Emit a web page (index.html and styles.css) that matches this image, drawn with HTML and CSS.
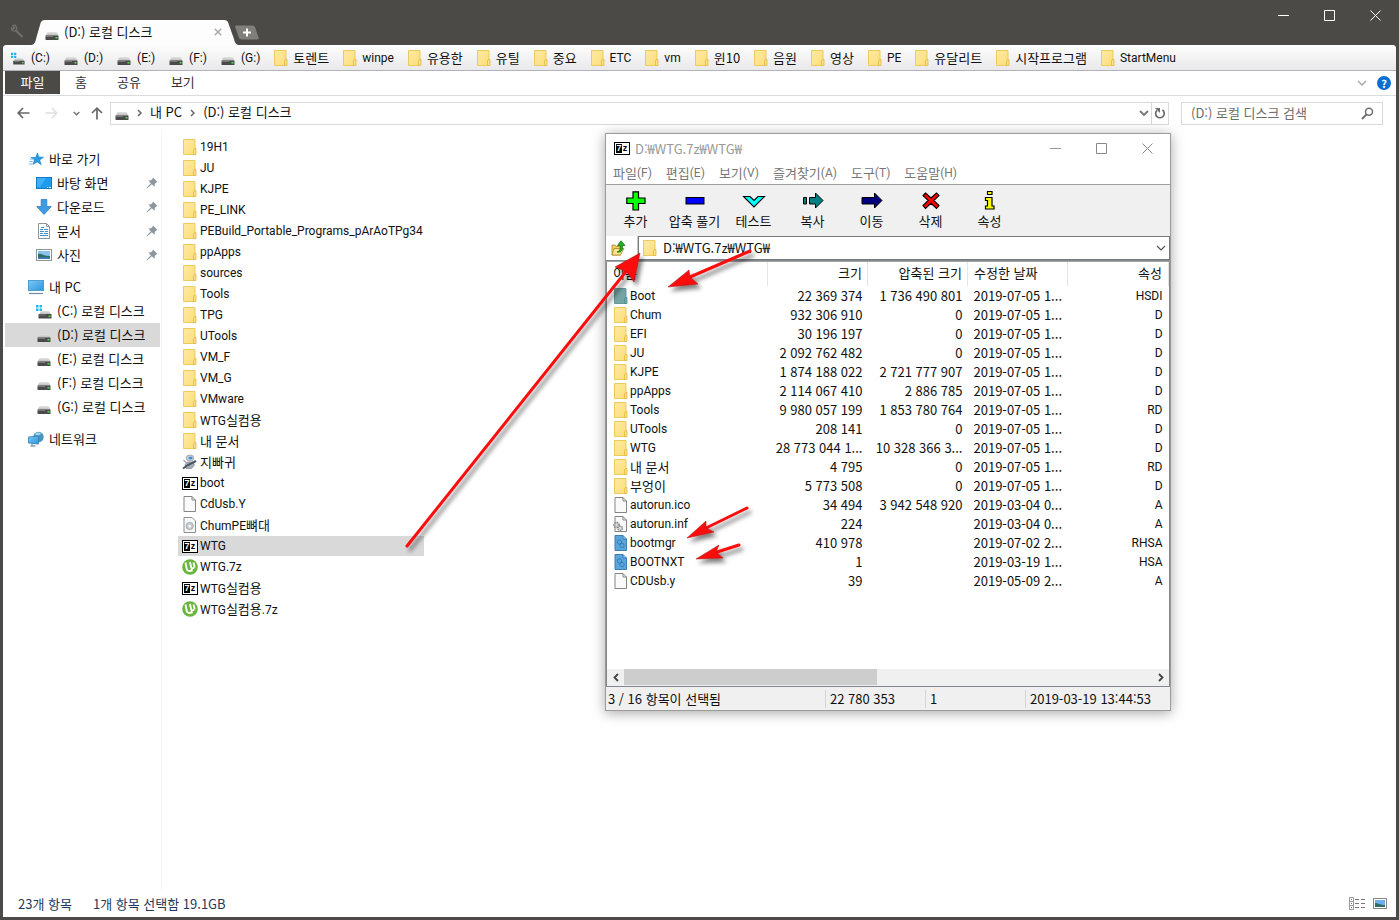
FILE: index.html
```html
<!DOCTYPE html>
<html lang="ko">
<head>
<meta charset="utf-8">
<title>(D:) 로컬 디스크</title>
<link rel="stylesheet" href="styles.css">
</head>
<body>
<svg class="defs" aria-hidden="true">
  <defs>
    <linearGradient id="gFolder" x1="0" y1="0" x2="1" y2="1"><stop offset="0" stop-color="#ffeaa3"/><stop offset="1" stop-color="#fbdd78"/></linearGradient>
    <linearGradient id="gBlue" x1="0" y1="0" x2="1" y2="1"><stop offset="0" stop-color="#7cc9f7"/><stop offset="1" stop-color="#2b95dd"/></linearGradient>
    <linearGradient id="gDrive" x1="0" y1="0" x2="0" y2="1"><stop offset="0" stop-color="#e4e4e4"/><stop offset="1" stop-color="#b4b4b4"/></linearGradient>
    <filter id="shadow" x="-30%" y="-60%" width="160%" height="220%"><feDropShadow dx="3" dy="4" stdDeviation="2" flood-color="#000" flood-opacity=".5"/></filter>
  </defs>
  <symbol id="folder" viewBox="0 0 14 16"><path d="M.5.5H12V15.500H.5z" fill="url(#gFolder)" stroke="#eccb5c"/><path d="M10.500 15.500V11l1-1.500h1.500v6z" fill="#fbe08a" stroke="#e3b93f" stroke-width=".8"/></symbol>
  <symbol id="folder-sel" viewBox="0 0 14 16"><path d="M.5.5H12V15.500H.5z" fill="#76a5a6" stroke="#65999d"/><path d="M10.500 15.500V11l1-1.500h1.500v6z" fill="#79a9a6" stroke="#568a8a" stroke-width=".8"/></symbol>
  <symbol id="drive" viewBox="0 0 14 16"><path d="M2.500 7h9L13.500 11H.5z" fill="url(#gDrive)"/><rect x=".5" y="10.500" width="13" height="4.500" rx=".5" fill="#4a4a4a"/><path d="M1 11h7v1H1z" fill="#777"/><rect x="10.500" y="12" width="2" height="1.500" fill="#4be04b"/></symbol>
  <symbol id="drive-win" viewBox="0 0 16 16"><path d="M5 8h8l2 3.500H3z" fill="url(#gDrive)"/><rect x="2.500" y="11" width="13" height="4.500" rx=".5" fill="#4a4a4a"/><path d="M3 11.500h7v1H3z" fill="#777"/><rect x="12.500" y="12.500" width="2" height="1.500" fill="#4be04b"/><path d="M0 2h2.500v2.500H0zM3.500 2H6v2.500H3.500zM0 5.500h2.500V8H0zM3.500 5.500H6V8H3.500z" fill="#18b9ee"/></symbol>
  <symbol id="star" viewBox="0 0 16 16"><path d="M9.500 2l1.300 4 4.700.2-3.800 2.700 1.500 4.800-4-2.800-4.400 2.600 1.700-4.700L3 6.500h4.600z" fill="#2a9be4" stroke="#1c7fc4" stroke-width=".6"/><path d="M2 8h3M1.500 10.500h3M1 13h3" stroke="#5db7ec"/></symbol>
  <symbol id="desktop" viewBox="0 0 16 16"><rect x=".5" y="2.500" width="15" height="11" fill="#1f9bf0" stroke="#0f7cc7"/><path d="M1 3h9L4 12H1z" fill="#3fb0f8"/><path d="M11 12.500h1M13 12.500h2" stroke="#fff"/></symbol>
  <symbol id="download" viewBox="0 0 16 16"><path d="M5.200.5h5.600V7.500h4.500L8 15.500.7 7.500h4.500z" fill="#3e9ae2" stroke="#2d80c8" stroke-width=".8"/></symbol>
  <symbol id="document" viewBox="0 0 16 16"><path d="M2.500.5h8l3 3v12h-11z" fill="#fff" stroke="#8b959d"/><path d="M10.500.5v3h3" fill="none" stroke="#8b959d"/><path d="M4 6.500h3M8 6.500h4M4 8.500h4M9 8.500h3M4 10.500h3M8 10.500h4M4 12.500h8M5 4.500h3" stroke="#3a8fcf"/></symbol>
  <symbol id="picture" viewBox="0 0 16 16"><rect x=".5" y="2.500" width="15" height="11" fill="#fff" stroke="#8b959d"/><rect x="2" y="4" width="12" height="8" fill="#8cc3ec"/><path d="M2 7c3-1 5 2 12 2v3H2z" fill="#2f6e68"/><path d="M2 10.500h12V12H2z" fill="#3b7fc0"/></symbol>
  <symbol id="computer" viewBox="0 0 16 16"><rect x=".5" y="1.500" width="15" height="10" fill="url(#gBlue)" stroke="#4e9fce"/><path d="M1 14.500h14" stroke="#6f8aa8" stroke-width="1.200"/></symbol>
  <symbol id="network" viewBox="0 0 16 16"><circle cx="10.500" cy="6" r="5.200" fill="#4b94be"/><path d="M7 3c2-2 5-2 6 0-2 1-3 3-6 0z" fill="#9fd4ec"/><path d="M.5 6l10-1v8L.5 12z" fill="url(#gBlue)" stroke="#2d7fb5" stroke-width=".8"/><path d="M4 13v1.500M2.500 15h5" stroke="#4d7187"/></symbol>
  <symbol id="pin" viewBox="0 0 12 12"><path d="M7 .5L11.500 5l-1.300.5L8.800 7l-.3 2.700L5.800 7.200 1 11.500.5 11 4.800 6.200 2.300 3.500 5 3.200 6.500 1.800z" fill="#8d979f"/></symbol>
  <symbol id="utorrent" viewBox="0 0 16 16"><circle cx="8" cy="8" r="7.800" fill="#6ab53e"/><path d="M3.500 3.500l1.200 6.200c.5 2.600 3.300 2.800 4.900 1.300l.4 1.600M8 3l1.100 5.200c.3 1.500 2.100 1.400 2.800.4M11.500 3.500l1.200 5" fill="none" stroke="#fff" stroke-width="1.900"/></symbol>
  <symbol id="file" viewBox="0 0 14 16"><path d="M1 .5h8l3.500 3.500v11.500H1z" fill="#fafafa" stroke="#858585"/><path d="M9 .5V4h3.500" fill="none" stroke="#858585"/></symbol>
  <symbol id="file-set" viewBox="0 0 14 16"><path d="M1 .5h8l3.500 3.500v11.500H1z" fill="#f7f7f7" stroke="#8f8f8f"/><circle cx="6.700" cy="9" r="3.600" fill="#c8cccf" stroke="#a6abb0"/><path d="M5.500 7.500l3 1.500-2.500 2z" fill="#fff"/></symbol>
  <symbol id="file-inf" viewBox="0 0 16 16"><path d="M2 .5h8l3.500 3.500v11.500H2z" fill="#fafafa" stroke="#858585"/><path d="M10 .5V4h3.500" fill="none" stroke="#858585"/><circle cx="3.500" cy="9" r="2.600" fill="none" stroke="#8e8e8e" stroke-width="1.600" stroke-dasharray="1.600 .8"/><circle cx="7.200" cy="12.300" r="2.200" fill="#ddd" stroke="#8e8e8e" stroke-width="1.500" stroke-dasharray="1.400 .7"/><circle cx="3.500" cy="9" r="1.700" fill="#e6e6e6" stroke="#999" stroke-width=".8"/></symbol>
  <symbol id="file-sys" viewBox="0 0 14 16"><path d="M1 .5h8l3.500 3.500v11.500H1z" fill="#5ba5db" stroke="#3b7fb6"/><path d="M9 .5V4h3.500" fill="#8ac4ec" stroke="#3b7fb6"/><circle cx="5.500" cy="7" r="2.200" fill="none" stroke="#2f75b0" stroke-width=".8"/><circle cx="8" cy="10.500" r="2.200" fill="none" stroke="#2f75b0" stroke-width=".8"/></symbol>
  <symbol id="robot" viewBox="0 0 16 16"><ellipse cx="8" cy="4" rx="3.800" ry="3" fill="#c6cdd5" stroke="#8994a1" stroke-width=".7"/><ellipse cx="8.500" cy="4" rx="2" ry="1.300" fill="#2c93e0"/><path d="M5 8l6 0 1.500 3-3 3.500H4L3 11z" fill="#a4acb6" stroke="#7a848f" stroke-width=".7"/><path d="M1 14.500l5-3.500 8-4" stroke="#4c5661" stroke-width="2" fill="none"/><path d="M1.500 6l3 3" stroke="#a4acb6" stroke-width="1.500"/></symbol>
</svg>

<header class="titlebar">
  <button class="wrench" aria-label="설정"><svg width="14" height="14" viewBox="0 0 14 14"><path d="M6 6.500l6 6" stroke="#706e6a" stroke-width="2.200" stroke-linecap="round"/><path d="M2.500 1.500L4.500 3.500 3.500 5l-2-1C1 6.500 3.500 8 6 6.500 7.500 4.500 6.500 1 3.500 1" fill="none" stroke="#706e6a" stroke-width="1.400"/></svg></button>
  <div class="tab">
    <svg class="tab-shape" width="210" height="25" viewBox="0 0 210 25"><path d="M0 25c4 0 5-2 6-6l4-14c1-4 2-5 6-5h177c4 0 5 1 6 5l5 14c1 4 2 6 6 6z" fill="#fdfdfd"/></svg>
    <svg class="ic14"><use href="#drive"/></svg><span class="tab-name">(D:) 로컬 디스크</span>
    <button class="tab-close" aria-label="탭 닫기"><svg width="8" height="8" viewBox="0 0 8 8"><path d="M.8.8l6.400 6.400M7.200.8L.8 7.200" stroke="#a9a9a9" stroke-width="1.500"/></svg></button>
  </div>
  <button class="newtab" aria-label="새 탭"><svg width="24" height="15" viewBox="0 0 24 15"><path d="M1 .5h16c2 0 3 1 3.500 3l3 9c.3 1.500 0 2-1.500 2H7c-2 0-3-1-3.500-3L.5 3C0 1 0 .5 1 .5z" fill="#817f7b"/><path d="M12 3.500v8M8 7.500h8" stroke="#fff" stroke-width="2"/></svg></button>
  <div class="caption">
    <button aria-label="최소화"><svg width="11" height="11" viewBox="0 0 11 11"><path d="M0 5.500h11" stroke="#fff"/></svg></button>
    <button aria-label="최대화"><svg width="11" height="11" viewBox="0 0 11 11"><path d="M.5.5h10v10H.5z" stroke="#fff" fill="none"/></svg></button>
    <button aria-label="닫기"><svg width="11" height="11" viewBox="0 0 11 11"><path d="M.5.5l10 10M10.500.5l-10 10" stroke="#fff"/></svg></button>
  </div>
</header>

<div class="frame">
  <nav class="bookmarks">
    <button class="drv lat"><svg class="ic14"><use href="#drive-win"/></svg>(C:)</button>
    <button class="drv lat"><svg class="ic14"><use href="#drive"/></svg>(D:)</button>
    <button class="drv lat"><svg class="ic14"><use href="#drive"/></svg>(E:)</button>
    <button class="drv lat"><svg class="ic14"><use href="#drive"/></svg>(F:)</button>
    <button class="drv lat"><svg class="ic14"><use href="#drive"/></svg>(G:)</button>
    <button><svg class="ic14"><use href="#folder"/></svg>토렌트</button>
    <button class="lat"><svg class="ic14"><use href="#folder"/></svg>winpe</button>
    <button><svg class="ic14"><use href="#folder"/></svg>유용한</button>
    <button><svg class="ic14"><use href="#folder"/></svg>유틸</button>
    <button><svg class="ic14"><use href="#folder"/></svg>중요</button>
    <button class="lat"><svg class="ic14"><use href="#folder"/></svg>ETC</button>
    <button class="lat"><svg class="ic14"><use href="#folder"/></svg>vm</button>
    <button><svg class="ic14"><use href="#folder"/></svg>윈10</button>
    <button><svg class="ic14"><use href="#folder"/></svg>음원</button>
    <button><svg class="ic14"><use href="#folder"/></svg>영상</button>
    <button class="lat"><svg class="ic14"><use href="#folder"/></svg>PE</button>
    <button><svg class="ic14"><use href="#folder"/></svg>유달리트</button>
    <button><svg class="ic14"><use href="#folder"/></svg>시작프로그램</button>
    <button class="lat"><svg class="ic14"><use href="#folder"/></svg>StartMenu</button>
  </nav>

  <div class="ribbon">
    <button class="ribbon-file">파일</button>
    <button>홈</button>
    <button>공유</button>
    <button>보기</button>
    <span class="spacer"></span>
    <button class="expand" aria-label="리본 확장"><svg width="10" height="6" viewBox="0 0 10 6"><path d="M1 1l4 4 4-4" fill="none" stroke="#a5a5a5" stroke-width="1.300"/></svg></button>
    <button class="help" aria-label="도움말">?</button>
  </div>

  <div class="addressrow">
    <div class="navbuttons">
      <button class="nav-back" aria-label="뒤로"><svg width="13" height="12" viewBox="0 0 13 12"><path d="M12.500 6H1.500M6 1L1.200 6 6 11" fill="none" stroke="#686868" stroke-width="1.700"/></svg></button>
      <button class="nav-forward" aria-label="앞으로"><svg width="13" height="12" viewBox="0 0 13 12"><path d="M.5 6h11M7 1l4.800 5L7 11" fill="none" stroke="#dedede" stroke-width="1.500"/></svg></button>
      <button class="nav-recent" aria-label="최근 위치"><svg width="7" height="5" viewBox="0 0 7 5"><path d="M.7 1l2.800 2.800L6.300 1" fill="none" stroke="#777" stroke-width="1.500"/></svg></button>
      <button aria-label="위로"><svg width="12" height="13" viewBox="0 0 12 13"><path d="M6 12.500V1.500M1 6l5-4.800L11 6" fill="none" stroke="#686868" stroke-width="1.700"/></svg></button>
    </div>
    <div class="address">
      <svg class="ic14"><use href="#drive"/></svg>
      <svg class="crumb-sep" width="5" height="8" viewBox="0 0 5 8"><path d="M1 1l3 3-3 3" fill="none" stroke="#666" stroke-width="1.500"/></svg>
      <button>내 PC</button>
      <svg class="crumb-sep" width="5" height="8" viewBox="0 0 5 8"><path d="M1 1l3 3-3 3" fill="none" stroke="#666" stroke-width="1.500"/></svg>
      <button>(D:) 로컬 디스크</button>
      <span class="spacer"></span>
      <button class="history" aria-label="이전 위치"><svg width="10" height="7" viewBox="0 0 10 7"><path d="M1 1l4 4 4-4" fill="none" stroke="#777" stroke-width="1.900"/></svg></button>
      <button class="refresh" aria-label="새로 고침"><svg width="12" height="12" viewBox="0 0 12 12"><path d="M3 3.300A4.300 4.300 0 1 0 8.500 3" fill="none" stroke="#6c6c6c" stroke-width="1.700"/><path d="M1 1h5v5z" fill="#6c6c6c"/></svg></button>
    </div>
    <form class="search">
      <input type="text" aria-label="검색" placeholder="(D:) 로컬 디스크 검색">
      <svg width="13" height="13" viewBox="0 0 13 13"><circle cx="8" cy="4.800" r="3.500" fill="none" stroke="#6f6f6f" stroke-width="1.500"/><path d="M5.500 7.500L1 12" stroke="#6f6f6f" stroke-width="2"/></svg>
    </form>
  </div>

  <main class="content">
    <nav class="sidebar">
      <a class="head" href="#"><svg class="ic16"><use href="#star"/></svg>바로 가기</a>
      <a href="#"><svg class="ic16"><use href="#desktop"/></svg><span>바탕 화면</span><svg class="pin"><use href="#pin"/></svg></a>
      <a href="#"><svg class="ic16"><use href="#download"/></svg><span>다운로드</span><svg class="pin"><use href="#pin"/></svg></a>
      <a href="#"><svg class="ic16"><use href="#document"/></svg><span>문서</span><svg class="pin"><use href="#pin"/></svg></a>
      <a href="#"><svg class="ic16"><use href="#picture"/></svg><span>사진</span><svg class="pin"><use href="#pin"/></svg></a>
      <a class="head" href="#"><svg class="ic16"><use href="#computer"/></svg>내 PC</a>
      <a href="#"><svg class="ic16"><use href="#drive-win"/></svg>(C:) 로컬 디스크</a>
      <a class="selected" href="#"><svg class="ic16"><use href="#drive"/></svg>(D:) 로컬 디스크</a>
      <a href="#"><svg class="ic16"><use href="#drive"/></svg>(E:) 로컬 디스크</a>
      <a href="#"><svg class="ic16"><use href="#drive"/></svg>(F:) 로컬 디스크</a>
      <a href="#"><svg class="ic16"><use href="#drive"/></svg>(G:) 로컬 디스크</a>
      <a class="head" href="#"><svg class="ic16"><use href="#network"/></svg>네트워크</a>
    </nav>
    <ul class="files">
      <li class="lat"><svg class="ic16"><use href="#folder"/></svg>19H1</li>
      <li class="lat"><svg class="ic16"><use href="#folder"/></svg>JU</li>
      <li class="lat"><svg class="ic16"><use href="#folder"/></svg>KJPE</li>
      <li class="lat"><svg class="ic16"><use href="#folder"/></svg>PE_LINK</li>
      <li class="lat"><svg class="ic16"><use href="#folder"/></svg>PEBuild_Portable_Programs_pArAoTPg34</li>
      <li class="lat"><svg class="ic16"><use href="#folder"/></svg>ppApps</li>
      <li class="lat"><svg class="ic16"><use href="#folder"/></svg>sources</li>
      <li class="lat"><svg class="ic16"><use href="#folder"/></svg>Tools</li>
      <li class="lat"><svg class="ic16"><use href="#folder"/></svg>TPG</li>
      <li class="lat"><svg class="ic16"><use href="#folder"/></svg>UTools</li>
      <li class="lat"><svg class="ic16"><use href="#folder"/></svg>VM_F</li>
      <li class="lat"><svg class="ic16"><use href="#folder"/></svg>VM_G</li>
      <li class="lat"><svg class="ic16"><use href="#folder"/></svg>VMware</li>
      <li><svg class="ic16"><use href="#folder"/></svg><span><span class="lat">WTG</span>실컴용</span></li>
      <li><svg class="ic16"><use href="#folder"/></svg>내 문서</li>
      <li><svg class="ic16"><use href="#robot"/></svg>지빠귀</li>
      <li class="lat"><span class="seven"><b>7</b><b>z</b></span>boot</li>
      <li class="lat"><svg class="ic16"><use href="#file"/></svg>CdUsb.Y</li>
      <li><svg class="ic16"><use href="#file-set"/></svg><span><span class="lat">ChumPE</span>뼈대</span></li>
      <li class="lat selected"><span class="seven"><b>7</b><b>z</b></span>WTG</li>
      <li class="lat"><svg class="ic16"><use href="#utorrent"/></svg>WTG.7z</li>
      <li><span class="seven"><b>7</b><b>z</b></span><span><span class="lat">WTG</span>실컴용</span></li>
      <li><svg class="ic16"><use href="#utorrent"/></svg><span><span class="lat">WTG</span>실컴용<span class="lat">.7z</span></span></li>
    </ul>
  </main>

  <footer class="status">
    <span>23개 항목</span>
    <span>1개 항목 선택함 19.1GB</span>
    <span class="spacer"></span>
    <button aria-label="자세히"><svg width="17" height="13" viewBox="0 0 17 13"><path d="M.5.5h4v12h-4zM.5 4.500h4M.5 8.500h4" fill="none" stroke="#999"/><path d="M2 2.500h1M2 6.500h1M2 10.500h1" stroke="#3c78b4"/><path d="M6 2.500h4M12 2.500h4M6 6.500h4M12 6.500h4M6 10.500h4M12 10.500h4" stroke="#777"/></svg></button>
    <button aria-label="큰 아이콘"><svg width="14" height="11" viewBox="0 0 14 11"><rect x=".5" y=".5" width="13" height="10" fill="#fff" stroke="#888"/><path d="M2 2h10v7H2z" fill="#6fb0ec"/><path d="M2 5c3 0 5 2 10 2v2H2z" fill="#2f6e68"/></svg></button>
  </footer>
</div>

<section class="zip">
  <header class="zip-title">
    <span class="seven"><b>7</b><b>z</b></span><span class="zip-name">D:₩WTG.7z₩WTG₩</span>
    <button aria-label="최소화"><svg width="11" height="11" viewBox="0 0 11 11"><path d="M0 5.500h11" stroke="#999"/></svg></button>
    <button aria-label="최대화"><svg width="11" height="11" viewBox="0 0 11 11"><path d="M.5.5h10v10H.5z" stroke="#888" fill="none"/></svg></button>
    <button aria-label="닫기"><svg width="11" height="11" viewBox="0 0 11 11"><path d="M.5.5l10 10M10.500.5l-10 10" stroke="#888"/></svg></button>
  </header>
  <nav class="zip-menu">
    <button>파일<span class="lat">(F)</span></button><button>편집<span class="lat">(E)</span></button><button>보기<span class="lat">(V)</span></button><button>즐겨찾기<span class="lat">(A)</span></button><button>도구<span class="lat">(T)</span></button><button>도움말<span class="lat">(H)</span></button>
  </nav>
  <div class="zip-tools">
    <button><svg width="24" height="20" viewBox="0 0 24 20"><path d="M9 .8h5.500V7H21v5.500h-6.500V19H9v-6.500H2.800V7H9z" fill="#0f0" stroke="#000" stroke-width="1.200"/></svg>추가</button>
    <button><svg width="24" height="20" viewBox="0 0 24 20"><rect x="3" y="6.500" width="18" height="6.500" fill="#00f" stroke="#000"/></svg>압축 풀기</button>
    <button><svg width="24" height="20" viewBox="0 0 24 20"><path d="M1.500 5.500H8l4 4 4-4h6.500L12 16z" fill="#0ff" stroke="#000" stroke-width="1.100"/></svg>테스트</button>
    <button><svg width="24" height="20" viewBox="0 0 24 20"><path d="M2.500 6.500h3v6.500h-3zM8.500 6.500h6V2L22 9.500 14.500 17v-4H8.500z" fill="#008080" stroke="#000"/></svg>복사</button>
    <button><svg width="24" height="20" viewBox="0 0 24 20"><path d="M2 6.500h12.500V2L22 9.500 14.500 17v-4H2z" fill="#000080" stroke="#000"/></svg>이동</button>
    <button><svg width="24" height="20" viewBox="0 0 24 20"><path d="M6.500 2L12 7l5.500-5 2.500 2.500-5.200 5 5.200 5-2.500 3-5.500-5.200-5.500 5.200L4 14.500l5.200-5L4 4.500z" fill="#f00" stroke="#000" stroke-width="1.100"/></svg>삭제</button>
    <button><svg width="24" height="20" viewBox="0 0 24 20"><path d="M9.500.5H14v3H9.500zM7.500 6.500H14V15h2v3H7.500v-3h2V9.500h-2z" fill="#ff0" stroke="#000" stroke-width="1.200"/></svg>속성</button>
  </div>
  <div class="zip-path">
    <button class="up" aria-label="위로"><svg width="15" height="16" viewBox="0 0 15 16"><path d="M1 5h3l1 1.500h4.500V15H1z" fill="#f0d060" stroke="#ad8820" stroke-width=".8"/><path d="M3 8.500h10L9.500 15H1z" fill="#fbe690" stroke="#ad8820" stroke-width=".8"/><path d="M6 12c3-.5 3.500-3 3-6.500H6.500L10 .8l4 4.700h-2.500C12 10 10.500 13 6 12z" fill="#22b022" stroke="#0a6a0a" stroke-width=".7"/></svg></button>
    <div class="combo"><svg class="ic16"><use href="#folder"/></svg><input type="text" aria-label="경로" value="D:₩WTG.7z₩WTG₩"><button aria-label="경로 목록"><svg width="10" height="6" viewBox="0 0 10 6"><path d="M1 1l4 4 4-4" fill="none" stroke="#555" stroke-width="1.200"/></svg></button></div>
  </div>
  <div class="zip-list">
    <table>
      <colgroup><col><col class="c-num"><col class="c-num"><col class="c-num"><col class="c-last"></colgroup>
      <thead><tr><th>이름</th><th class="r">크기</th><th class="r">압축된 크기</th><th>수정한 날짜</th><th class="r">속성</th></tr></thead>
      <tbody>
        <tr><td class="lat"><svg class="ic16"><use href="#folder-sel"/></svg>Boot</td><td class="r">22 369 374</td><td class="r">1 736 490 801</td><td>2019-07-05 1...</td><td class="r lat">HSDI</td></tr>
        <tr><td class="lat"><svg class="ic16"><use href="#folder"/></svg>Chum</td><td class="r">932 306 910</td><td class="r">0</td><td>2019-07-05 1...</td><td class="r lat">D</td></tr>
        <tr><td class="lat"><svg class="ic16"><use href="#folder"/></svg>EFI</td><td class="r">30 196 197</td><td class="r">0</td><td>2019-07-05 1...</td><td class="r lat">D</td></tr>
        <tr><td class="lat"><svg class="ic16"><use href="#folder"/></svg>JU</td><td class="r">2 092 762 482</td><td class="r">0</td><td>2019-07-05 1...</td><td class="r lat">D</td></tr>
        <tr><td class="lat"><svg class="ic16"><use href="#folder"/></svg>KJPE</td><td class="r">1 874 188 022</td><td class="r">2 721 777 907</td><td>2019-07-05 1...</td><td class="r lat">D</td></tr>
        <tr><td class="lat"><svg class="ic16"><use href="#folder"/></svg>ppApps</td><td class="r">2 114 067 410</td><td class="r">2 886 785</td><td>2019-07-05 1...</td><td class="r lat">D</td></tr>
        <tr><td class="lat"><svg class="ic16"><use href="#folder"/></svg>Tools</td><td class="r">9 980 057 199</td><td class="r">1 853 780 764</td><td>2019-07-05 1...</td><td class="r lat">RD</td></tr>
        <tr><td class="lat"><svg class="ic16"><use href="#folder"/></svg>UTools</td><td class="r">208 141</td><td class="r">0</td><td>2019-07-05 1...</td><td class="r lat">D</td></tr>
        <tr><td class="lat"><svg class="ic16"><use href="#folder"/></svg>WTG</td><td class="r">28 773 044 1...</td><td class="r">10 328 366 3...</td><td>2019-07-05 1...</td><td class="r lat">D</td></tr>
        <tr><td><svg class="ic16"><use href="#folder"/></svg>내 문서</td><td class="r">4 795</td><td class="r">0</td><td>2019-07-05 1...</td><td class="r lat">RD</td></tr>
        <tr><td><svg class="ic16"><use href="#folder"/></svg>부엉이</td><td class="r">5 773 508</td><td class="r">0</td><td>2019-07-05 1...</td><td class="r lat">D</td></tr>
        <tr><td class="lat"><svg class="ic16"><use href="#file"/></svg>autorun.ico</td><td class="r">34 494</td><td class="r">3 942 548 920</td><td>2019-03-04 0...</td><td class="r lat">A</td></tr>
        <tr><td class="lat"><svg class="ic16"><use href="#file-inf"/></svg>autorun.inf</td><td class="r">224</td><td class="r"></td><td>2019-03-04 0...</td><td class="r lat">A</td></tr>
        <tr><td class="lat"><svg class="ic16"><use href="#file-sys"/></svg>bootmgr</td><td class="r">410 978</td><td class="r"></td><td>2019-07-02 2...</td><td class="r lat">RHSA</td></tr>
        <tr><td class="lat"><svg class="ic16"><use href="#file-sys"/></svg>BOOTNXT</td><td class="r">1</td><td class="r"></td><td>2019-03-19 1...</td><td class="r lat">HSA</td></tr>
        <tr><td class="lat"><svg class="ic16"><use href="#file"/></svg>CDUsb.y</td><td class="r">39</td><td class="r"></td><td>2019-05-09 2...</td><td class="r lat">A</td></tr>
      </tbody>
    </table>
    <div class="hscroll">
      <button aria-label="왼쪽"><svg width="6" height="9" viewBox="0 0 6 9"><path d="M5 1L1.500 4.500 5 8" fill="none" stroke="#444" stroke-width="1.800"/></svg></button>
      <div class="track"><div class="thumb"></div></div>
      <button aria-label="오른쪽"><svg width="6" height="9" viewBox="0 0 6 9"><path d="M1 1l3.500 3.500L1 8" fill="none" stroke="#444" stroke-width="1.800"/></svg></button>
    </div>
  </div>
  <footer class="zip-status"><span>3 / 16 항목이 선택됨</span><span>22 780 353</span><span>1</span><span>2019-03-19 13:44:53</span></footer>
</section>

<svg class="arrows" width="1399" height="920" viewBox="0 0 1399 920" aria-hidden="true">
  <g fill="#fb0d0d" stroke="#fb0d0d" filter="url(#shadow)">
    <path d="M407 546L628 269" stroke-width="3" stroke-linecap="round"/>
    <path d="M640 253L634 282 627 272 615 267z" stroke="#a01010" stroke-width=".5"/>
  </g>
  <g fill="#fb0d0d" stroke="#fb0d0d" filter="url(#shadow)">
    <path d="M750 251L690 277" stroke-width="3" stroke-linecap="round"/>
    <path d="M668 287L689 270 690 277 698 284z" stroke="#a01010" stroke-width=".5"/>
  </g>
  <g fill="#fb0d0d" stroke="#fb0d0d" filter="url(#shadow)">
    <path d="M747 508L706 528" stroke-width="3" stroke-linecap="round"/>
    <path d="M687 538L706 521 706 528 714 532z" stroke="#a01010" stroke-width=".5"/>
  </g>
  <g fill="#fb0d0d" stroke="#fb0d0d" filter="url(#shadow)">
    <path d="M739 545L714 553" stroke-width="3" stroke-linecap="round"/>
    <path d="M696 559L719 545 716 552 723 558z" stroke="#a01010" stroke-width=".5"/>
  </g>
</svg>
</body>
</html>
```

FILE: styles.css
```css
* { box-sizing: border-box; }
html, body { height: 100%; }
body {
  margin: 0;
  display: flex;
  flex-direction: column;
  padding: 0 3px 3px;
  background: #4b4a47;
  color: #111;
  font: 13px/18px "Noto Sans CJK KR", sans-serif;
  white-space: nowrap;
  overflow: hidden;
}
button {
  display: flex;
  align-items: center;
  justify-content: center;
  margin: 0;
  padding: 0;
  border: 0;
  background: none;
  color: inherit;
  font: inherit;
  white-space: nowrap;
}
input { font: inherit; color: inherit; border: 0; padding: 0; background: none; outline: 0; min-width: 0; }
svg { display: block; flex: none; }
.defs { position: absolute; width: 0; height: 0; }
.spacer { flex: 1; }
.ic14 { width: 14px; height: 16px; }
.ic16 { width: 16px; height: 16px; }
.lat { font-family: Roboto, "Noto Sans CJK KR", sans-serif; font-size: 12px; }
.seven { display: grid; grid-template-columns: 6px 6px; justify-content: center; width: 16px; height: 13px; padding: 1px 0; border: 1px solid #000; background: #fff; flex: none; }
.seven b { height: 9px; color: #000; font: bold 9px/9px "Liberation Sans", sans-serif; text-align: center; }
.seven b:first-child { background: #000; color: #fff; }

.titlebar { display: flex; align-items: flex-end; height: 45px; flex: none; }
.wrench { width: 27px; height: 28px; }
.tab { position: relative; display: flex; align-items: center; width: 210px; height: 25px; padding: 0 18px 2px 15px; }
.tab-shape { position: absolute; inset: 0; }
.tab .ic14, .tab-name, .tab-close { position: relative; }
.tab .ic14 { margin-top: 2px; }
.tab-name { flex: 1; padding-left: 5px; }
.newtab { height: 25px; margin-left: -5px; }
.caption { display: flex; align-self: flex-start; margin: 0 -2px 0 auto; }
.caption button { width: 46px; height: 30px; }

.frame { flex: 1; display: flex; flex-direction: column; min-height: 0; background: #fff; border-radius: 4px 4px 0 0; }
.bookmarks {
  display: flex;
  align-items: center;
  gap: 14px;
  height: 26px;
  padding-left: 8px;
  background: linear-gradient(#fdfdfd, #e9e9eb);
  border-bottom: 1px solid #b3b1b9;
  border-radius: 4px 4px 0 0;
  flex: none;
}
.bookmarks button { gap: 5px; }
.bookmarks .drv { gap: 6px; }
.ribbon { display: flex; align-items: flex-start; height: 25px; padding: 0 5px 0 2px; border-bottom: 1px solid #dadbdc; flex: none; color: #333; }
.ribbon button { height: 23px; padding: 0 15px 2px; }
.ribbon .ribbon-file { width: 55px; background: #4b4a47; color: #fff; }
.ribbon .expand { padding: 0 10px 0 0; height: 24px; }
.ribbon .help { width: 14px; height: 14px; margin-top: 5px; padding: 0; border-radius: 50%; background: #0a6fd0; color: #fff; font-weight: bold; font-size: 11px; line-height: 14px; }

.addressrow { display: flex; align-items: center; gap: 12px; height: 34px; padding: 0 13px 0 14px; flex: none; }
.navbuttons { display: flex; align-items: center; gap: 15px; width: 81px; }
.nav-recent { margin-right: -4px; }
.address { flex: 1; display: flex; align-items: center; height: 23px; padding-left: 4px; border: 1px solid #d9d9d9; }
.address button { padding-bottom: 2px; }
.crumb-sep { margin: 0 8px; }
.address .history { width: 15px; padding: 0; }
.address .refresh { width: 17px; height: 21px; padding: 0; border-left: 1px solid #d9d9d9; }
.search { display: flex; align-items: center; width: 202px; height: 23px; padding: 0 8px 0 9px; border: 1px solid #d9d9d9; }
.search input { flex: 1; }
.search input::placeholder { color: #6d6d6d; opacity: 1; }

.content { flex: 1; display: flex; min-height: 0; }
.sidebar { width: 159px; padding: 17px 1px 0 2px; border-right: 1px solid #f4f4f4; }
.sidebar a { display: flex; align-items: center; gap: 5px; height: 24px; padding: 0 2px 1px 31px; color: inherit; text-decoration: none; }
.sidebar a.head { padding-left: 23px; margin-top: 8px; }
.sidebar a.head:first-child { margin-top: 0; }
.sidebar .selected, .files .selected { background: #d9d9d9; }
.sidebar .pin { width: 12px; height: 12px; margin-left: auto; }
.files { list-style: none; margin: 0; padding: 7px 0 0 16px; }
.files li { display: flex; align-items: center; gap: 2px; width: 246px; height: 20px; margin-bottom: 1px; padding-left: 4px; }

.status { display: flex; align-items: center; gap: 21px; height: 27px; padding: 0 9px 0 15px; color: #1e395b; flex: none; }
.status button + button { margin-left: -14px; }

.zip {
  position: absolute;
  left: 605px;
  top: 133px;
  width: 566px;
  display: flex;
  flex-direction: column;
  background: #fff;
  border: 1px solid #9b9b9b;
  box-shadow: 0 2px 12px rgba(0, 0, 0, .35);
}
.zip-title { display: flex; align-items: center; height: 29px; padding-left: 8px; color: #999; }
.zip-name { flex: 1; padding-left: 5px; }
.zip-title button { width: 46px; height: 29px; }
.zip-menu { display: flex; gap: 14px; height: 21px; padding: 0 0 1px 7px; color: #777; }
.zip-tools { display: flex; height: 52px; padding-top: 6px; background: #f0f0f0; border-top: 1px solid #a0a0a0; }
.zip-tools button { flex-direction: column; justify-content: flex-start; width: 59px; gap: 1px; }
.zip-path { display: flex; height: 25px; background: #fff; border-bottom: 1px solid #828790; }
.up { width: 25px; }
.combo { flex: 1; display: flex; align-items: center; margin-left: 7px; padding: 0 3px; border: 1px solid #7a7a7a; box-shadow: -1px 0 #c8c8c8; }
.combo input { flex: 1; padding-left: 5px; }
.zip-list { display: flex; flex-direction: column; border: 1px solid #828790; border-top-color: #a4a4a4; }
.zip-list table { width: 100%; border-collapse: collapse; table-layout: fixed; }
.c-num { width: 100px; }
.c-last { width: 101px; }
.zip-list th { height: 24px; padding: 0 6px 2px; text-align: left; font-weight: normal; border-right: 1px solid #e5e5e5; }
.zip-list td { height: 19px; padding: 0 6px; line-height: 18px; }
.zip-list td:first-child { display: flex; align-items: center; gap: 1px; }
.zip-list .r { text-align: right; padding-left: 0; }
.zip-list .r:not(:last-child) { padding-right: 5px; }
.hscroll { display: flex; height: 17px; margin-top: 79px; background: #f0f0f0; }
.hscroll button { width: 17px; }
.track { flex: 1; padding: 0 0 1px; }
.thumb { width: 48%; height: 100%; background: #cdcdcd; }
.zip-status { display: grid; grid-template-columns: 219px 100px 100px 1fr; align-items: center; height: 23px; background: #f0f0f0; }
.zip-status span { padding-left: 4px; border-left: 1px solid #d5d5d5; }
.zip-status span:first-child { padding-left: 2px; border: 0; }

.arrows { position: absolute; left: 0; top: 0; pointer-events: none; }
```
